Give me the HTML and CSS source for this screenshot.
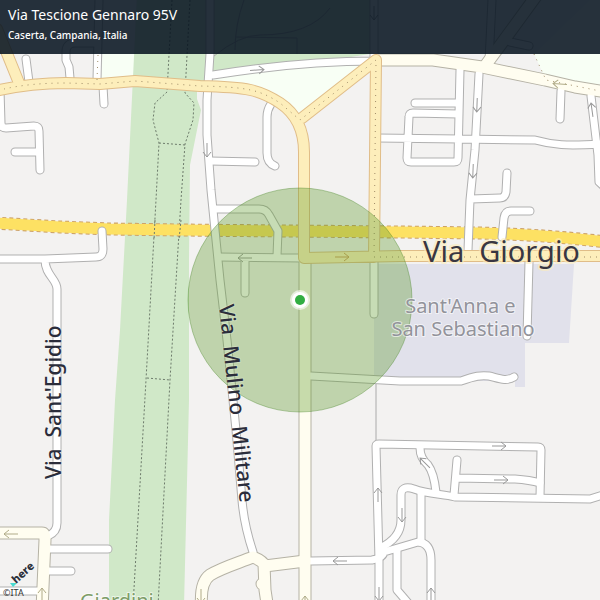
FILE: index.html
```html
<!DOCTYPE html>
<html lang="it">
<head>
<meta charset="utf-8">
<meta name="viewport" content="width=device-width, initial-scale=1">
<title>Via Tescione Gennaro 95V</title>
<link rel="stylesheet" href="styles.css">
</head>
<body>
<main class="map-view">
  <header class="place">
    <h1 class="place-title">Via Tescione Gennaro 95V</h1>
    <p class="place-region">Caserta, Campania, Italia</p>
  </header>
  <svg class="map" viewBox="0 0 600 600" preserveAspectRatio="xMidYMid slice" role="img" aria-label="Caserta, Campania">
    <defs>
      <g id="streets">
        <path d="M26 59L29 82M97 43H75Q66 43 66 52V60L69 67L70 78M99 0L97 80M103 86L104 104"/>
        <path d="M0 90L1 123Q1 128 6 128L34 126Q39 126 39 131L40 170M38 152H15"/>
        <path d="M210 -5V54L207 100V135L211 190L220 280L227 340L236 430L242 500Q244 525 253 552"/>
        <path d="M210 161L255 162M271 104Q267 110 267 117V153Q267 163 275 166M374 0V60M213 75Q300 61 376 61"/>
        <path d="M492 0L489 62M510 42L529 46"/>
        <path d="M102 231L103 249Q103 257 96 257L45 259H0M45 260C45 275 57 279 57 289V523Q57 532 48 536"/>
        <path d="M214 209H259Q266 209 269 215L278 231L277 256M219 257L304 258M245 258V293M374 262V314"/>
        <path d="M311 376L400 381H461C475 376 481 375 489 376C498 378 506 382 514 377"/>
        <path d="M377 138L460 139L535 140C553 145 566 146 600 144M460 70L458 158Q458 162 454 162H411Q407 162 407 158L409 117Q409 113 413 113L458 114M415 103H458"/>
        <path d="M479 74L475 150L470 200L468 250M471 199L500 198Q505 198 506 192L507 173M502 237L504 218Q505 211 511 211H530M561 91L560 119M591 96L598 155L599 182L608 190M529 262L527 336"/>
        <path d="M379 610V560L376 446Q376 444 379 444L538 447Q541 447 541 450L540 497"/>
        <path d="M380 548Q401 538 401 520V495Q401 485 414 489C427 494 443 494 455 497L590 499L606 494"/>
        <path d="M421 492V542M420 448Q420 458 428 465Q434 473 436 492M457 460L454 495M457 478L515 479Q530 480 540 483"/>
        <path d="M311 561L372 560Q383 558 384 552L418 542Q431 543 431 560V610M397 551V590L409 604"/>
        <path d="M48 549H108M48 571H71M-4 591H38"/>
      </g>
      <g id="avenues">
        <path d="M376 60H433L482 67L545 80L575 87L606 92M485 66L518 21L542 -12"/>
        <path d="M305 259V610M-5 533H42Q45 533 45 540L42 610"/>
        <path d="M202 610Q199 583 210 575C221 568 238 563 253 557Q263 561 265 566L305 561M264 564L265 590L268 610M262 584H264"/>
      </g>
      <g id="yellow-roads">
        <path d="M-3 29L19 83M-5 91Q30 83 66 83L100 84L135 81L200 86C248 87 260 90 280 103Q304 119 304 152V258M302 118L376 60L374 257M304 258L400 256H610"/>
      </g>
      <g id="arrow"><path d="M-7 0H7M2 -4L7 0L2 4"/></g>
    </defs>

    <rect class="land" x="-600" y="-600" width="1800" height="1800"/>
    <path class="lawn" d="M103 50H137V80H101ZM213 75L376 58L302 118L270 96L212 86ZM534 54L600 -10V88L546 80Z"/>
    <path class="park" d="M137 -5H370V54L300 65L212 76L197 86V99L201 110L190 165L189 260V400L184 606H109V520L115 400L120 330L127 200Z"/>
    <path class="district" d="M374 264H574L569 343H525V387H515V381H374Z"/>
    <path class="boundary" d="M376 382V442M244 0Q235 25 235 50M214 56Q240 35 260 35Q310 35 330 8M235 37L297 38V54"/>
    <path class="footpath" d="M172 0L167 92L155 103L153 120L159 143L156 200L146 380L133 606M190 0L185 93L194 103L193 120L185 144L181 200L170 380L158 606M159 143L185 145M147 378L170 380"/>

    <path class="highway-edge" d="M-5 223L60 227L110 229L180 230L400 232L480 233Q550 235 606 242"/>
    <path class="highway" d="M-5 223L60 227L110 229L180 230L400 232L480 233Q550 235 606 242"/>
    <path class="footpath" d="M155 220L154 240M181 220L179 240"/>

    <use href="#streets" class="street casing"/>
    <use href="#avenues" class="avenue casing"/>
    <use href="#streets" class="street"/>
    <use href="#avenues" class="avenue"/>
    <use href="#yellow-roads" class="yellow casing"/>
    <use href="#yellow-roads" class="yellow"/>
    <path class="dots" d="M4 89Q30 83 66 83L100 84L135 81L200 86C248 87 260 90 280 103L300 120L376 60L374 257H600M98 55L97 80M534 54L546 80L600 91"/>

    <g class="arrows">
      <use href="#arrow" transform="translate(257 70) rotate(-4)"/>
      <use href="#arrow" transform="translate(207 150) rotate(90)"/>
      <use href="#arrow" transform="translate(374 13) rotate(90)"/>
      <use href="#arrow" transform="translate(477 105) rotate(92)"/>
      <use href="#arrow" transform="translate(473 171) rotate(92)"/>
      <use href="#arrow" transform="translate(592 110) rotate(-98)"/>
      <use href="#arrow" transform="translate(245 258) rotate(180)"/>
      <use href="#arrow" transform="translate(499 446)"/>
      <use href="#arrow" transform="translate(501 480)"/>
      <use href="#arrow" transform="translate(425 463) rotate(-135)"/>
      <use href="#arrow" transform="translate(402 515) rotate(90)"/>
      <use href="#arrow" transform="translate(378 495) rotate(-90)"/>
      <use href="#arrow" transform="translate(379 594) rotate(90)"/>
      <use href="#arrow" transform="translate(431 595) rotate(-90)"/>
      <use href="#arrow" transform="translate(340 561) rotate(180)"/>
    </g>
    <g class="arrows warm">
      <use href="#arrow" transform="translate(560 84) rotate(184)"/>
      <use href="#arrow" transform="translate(11 534) rotate(180)"/>
      <use href="#arrow" transform="translate(42 595) rotate(-90)"/>
      <use href="#arrow" transform="translate(305 603) rotate(-90)"/>
      <use href="#arrow" transform="translate(201 596) rotate(90)"/>
    </g>
    <g class="arrows gold"><use href="#arrow" transform="translate(342 257)"/></g>

    <circle class="radius" cx="300" cy="300" r="112"/>

    <text class="label road-large" x="423" y="262">Via&#160; Giorgio</text>
    <text class="label area">
      <tspan x="463" y="313">Sant'Anna e</tspan>
      <tspan x="463" y="336">San Sebastiano</tspan>
    </text>
    <text class="label road" transform="translate(61 479) rotate(-90)">Via&#160; Sant'Egidio</text>
    <text class="label road" transform="translate(219 305) rotate(84)">Via&#160; Mulino&#160; Militare</text>
    <text class="label garden" x="80" y="608">Giardini</text>

    <circle class="pin-halo" cx="300" cy="300" r="10"/>
    <circle class="pin-ring" cx="300" cy="300" r="8"/>
    <circle class="pin" cx="300" cy="300" r="5"/>

    <path class="brand-mark" d="M10 583H17L13 587Z"/>
    <text class="brand" transform="translate(16 584) rotate(-42)">here</text>
    <text class="copyright" x="3" y="596">©ITA</text>
  </svg>
</main>
</body>
</html>
```
FILE: styles.css
```css
* {
  box-sizing: border-box;
}

body {
  margin: 0;
  font-family: "Noto Sans", "Open Sans", sans-serif;
}

.map-view {
  position: relative;
  height: 100vh;
  overflow: hidden;
}

.map {
  display: block;
  width: 100%;
  height: 100%;
}

.place {
  position: absolute;
  top: 0;
  left: 0;
  right: 0;
  padding: 5px 8px 11px;
  background: rgba(8, 20, 33, 0.88);
  color: #fff;
}

.place-title,
.place-region {
  margin: 0;
  font-weight: 400;
}

.place-title {
  font-size: 14px;
  line-height: 20px;
}

.place-region {
  margin-top: 2px;
  font-size: 10px;
  font-weight: 500;
  line-height: 16px;
}

.land { fill: #f3f2f1; }
.lawn { fill: #f8fff5; }
.park { fill: #d0e8c8; }
.district { fill: #e1e1eb; }

.boundary,
.footpath,
.highway,
.highway-edge,
.dots,
.street,
.avenue,
.yellow,
.arrows {
  fill: none;
}

.boundary { stroke: #aaa; }

.footpath {
  stroke: #6d7b6b;
  stroke-dasharray: 2 2;
}

.highway {
  stroke: #fde163;
  stroke-width: 11px;
}

.highway-edge {
  stroke: #cda268;
  stroke-width: 13px;
  stroke-dasharray: 4 3;
}

.street,
.avenue,
.yellow {
  stroke-linecap: round;
  stroke-linejoin: round;
}

.street { stroke: #fff; stroke-width: 7px; }
.avenue { stroke: #fffdf0; stroke-width: 11px; }
.yellow { stroke: #fdeebb; stroke-width: 10px; }
.street.casing { stroke: #b0b0b0; stroke-width: 9px; }
.avenue.casing { stroke: #b5b2a5; stroke-width: 13px; }
.yellow.casing { stroke: #e0bd88; stroke-width: 12px; }

.dots {
  stroke: #a08c68;
  stroke-dasharray: 1 5;
}

.arrows { stroke: #999; stroke-width: 1px; }
.arrows.warm { stroke: #b0ab88; }
.arrows.gold { stroke: #cfa05e; }

.radius {
  fill: rgba(94, 154, 43, 0.35);
  stroke: rgba(74, 134, 43, 0.4);
}

.label {
  fill: #2b2d3b;
  stroke: #fff;
  stroke-opacity: 0.6;
  stroke-width: 2px;
  stroke-linejoin: round;
  paint-order: stroke;
}

.road { font-size: 21px; font-weight: 500; stroke-opacity: 0.2; }
.road-large { font-size: 29px; fill: #393642; stroke: #fdecb9; stroke-width: 4px; }
.area { font-size: 20px; fill: #92939b; text-anchor: middle; }
.garden { font-size: 20px; fill: #7d9d68; }

.pin-halo { fill: rgba(255, 255, 255, 0.6); }
.pin-ring { fill: #fff; }
.pin { fill: #31ae42; }

.brand-mark { fill: #48dad0; }
.brand { font-size: 11px; font-weight: 800; fill: #2c303b; }
.copyright { font-size: 9px; fill: #333; }
```
